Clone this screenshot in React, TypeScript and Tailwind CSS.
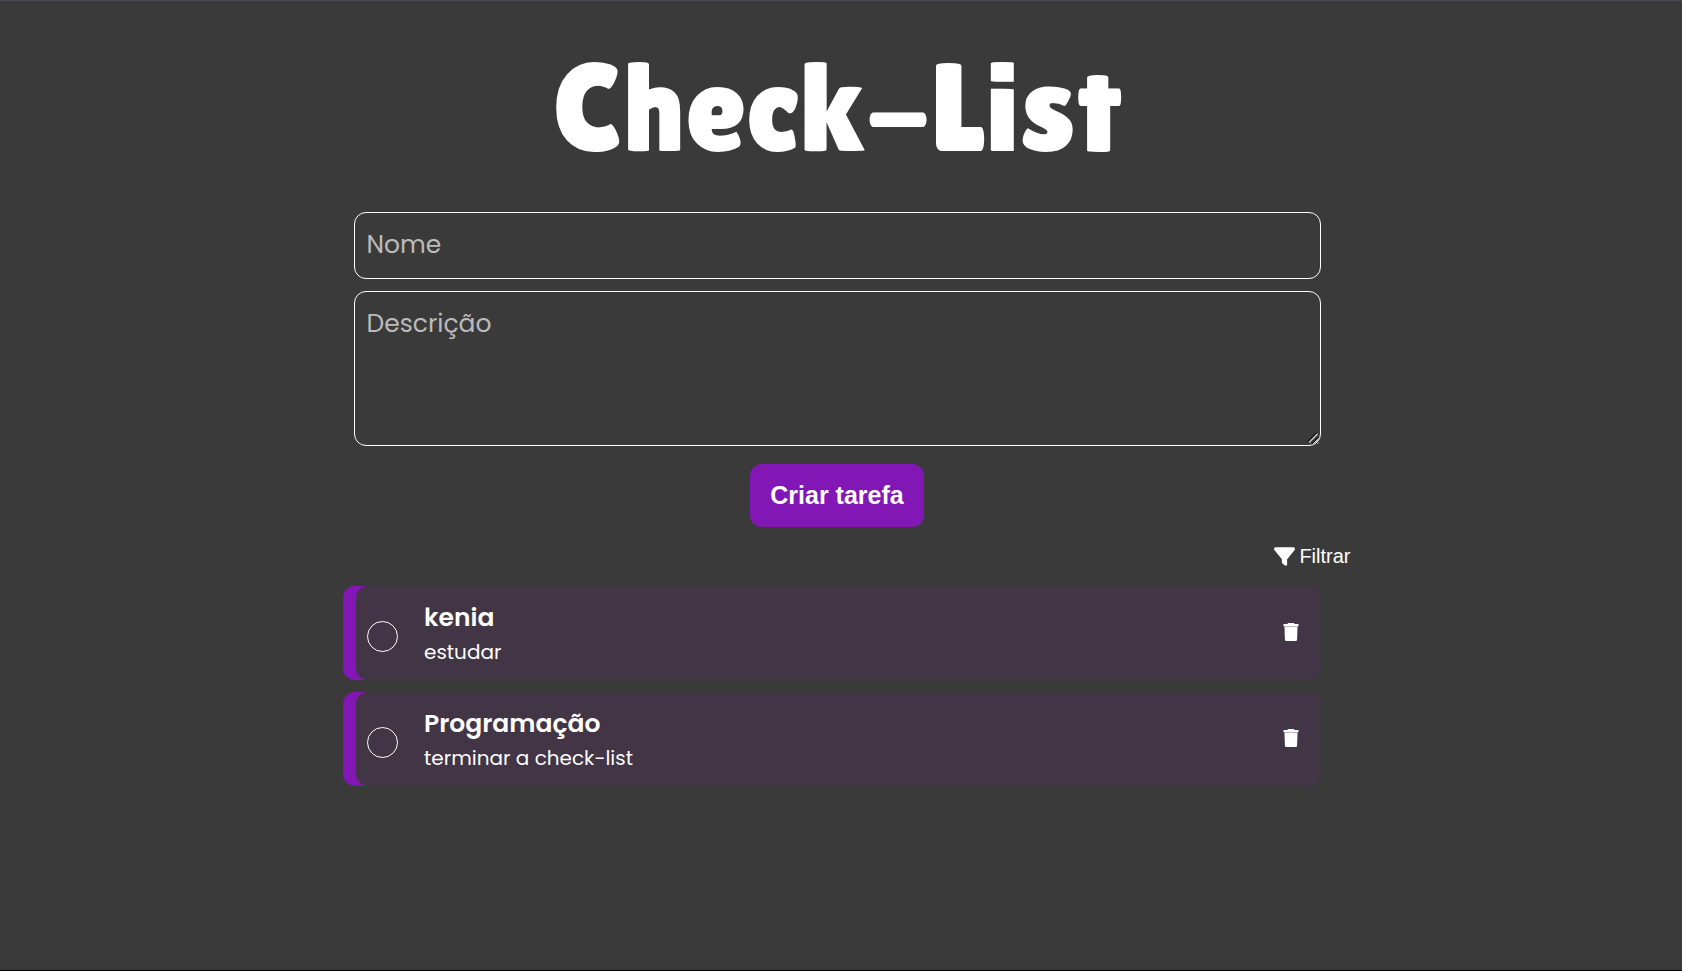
import { FaFilter } from 'react-icons/fa6';

const tasks = [
  { id: 'kenia', name: 'kenia', description: 'estudar' },
  { id: 'programacao', name: 'Programação', description: 'terminar a check-list' },
];

const fieldClass =
  'block w-full rounded-xl border border-white bg-transparent px-3 text-[25px] text-white placeholder:text-[#bbbbbb] outline-none focus:border-[#8217b5]';

function TrashIcon() {
  return (
    <svg viewBox="0 0 16 18" className="h-[18px] w-4" fill="currentColor" aria-hidden="true">
      <path d="M5 0h6l.6 1H15.500v2.200H.5V1H4.400z" />
      <path d="M1.500 4h13l-.4 12.500a1.500 1.500 0 0 1-1.500 1.500H3.400a1.500 1.500 0 0 1-1.500-1.500z" />
      <path d="M1.300 3.100h13.400v1H1.300z" fill="#c9c5ca" />
    </svg>
  );
}

function ResizeGrip() {
  return (
    <svg viewBox="0 0 12 12" className="pointer-events-none absolute right-0.5 bottom-0.5 size-3" fill="none" aria-hidden="true">
      <path d="M1 9.500 9.500 1M6 10.500 10.500 6" stroke="#111111" strokeWidth="1.500" />
      <path d="M2 10.500 10.500 2M7.500 11 11 7.500" stroke="#cccccc" strokeWidth="1.500" />
    </svg>
  );
}

function Task({ id, name, description }: { id: string; name: string; description: string }) {
  return (
    <li className="flex rounded-xl bg-[#8217b5]">
      <div className="ml-[13px] flex min-w-0 flex-1 items-center rounded-xl bg-[#423545] py-[13px] pr-5 pl-[11px]">
        <input
          id={id}
          type="checkbox"
          className="mt-1.5 size-[31px] shrink-0 appearance-none rounded-full border border-white checked:bg-[#8217b5]"
        />
        <label htmlFor={id} className="ml-[26px] min-w-0 flex-1">
          <span className="block text-[25px] leading-[38px] font-semibold">{name}</span>
          <span className="block text-xl leading-[30px]">{description}</span>
        </label>
        <button type="button" aria-label={`Excluir ${name}`} className="pb-0.5">
          <TrashIcon />
        </button>
      </div>
    </li>
  );
}

export default function App() {
  return (
    <main className="flex min-h-screen flex-col items-center border-t border-b border-t-[#4a4a57] border-b-black bg-[#3a3a3a] pr-2 font-['Poppins','Inter',sans-serif] text-white">
      <h1 className="mt-[33px] font-['Lilita_One','Lato',sans-serif] text-[125px] leading-[148px] font-normal">Check-List</h1>

      <form className="mt-[30px] flex w-full max-w-[967px] flex-col items-center gap-3" onSubmit={(e) => e.preventDefault()}>
        <input aria-label="Nome" placeholder="Nome" className={`${fieldClass} h-[67px] pb-0.5`} />
        <div className="relative w-full">
          <textarea aria-label="Descrição" placeholder="Descrição" className={`${fieldClass} h-[155px] resize py-3 leading-10`} />
          <ResizeGrip />
        </div>
        <button
          type="submit"
          className="mt-1.5 rounded-xl bg-[#8217b5] px-5 py-4 font-['Liberation_Sans',Arial,sans-serif] text-[25px] leading-[31px] font-bold"
        >
          Criar tarefa
        </button>
      </form>

      <div className="mt-[15px] flex w-full max-w-[1027px] justify-end">
        <button type="button" className="flex items-center gap-1 font-['Liberation_Sans',Arial,sans-serif] text-xl leading-7">
          <FaFilter className="size-[21px]" aria-hidden="true" />
          Filtrar
        </button>
      </div>

      <div className="mt-4 w-full max-w-[988px] pr-3">
        <ul className="flex flex-col gap-3">
          {tasks.map((task) => (
            <Task key={task.id} {...task} />
          ))}
        </ul>
      </div>
    </main>
  );
}
